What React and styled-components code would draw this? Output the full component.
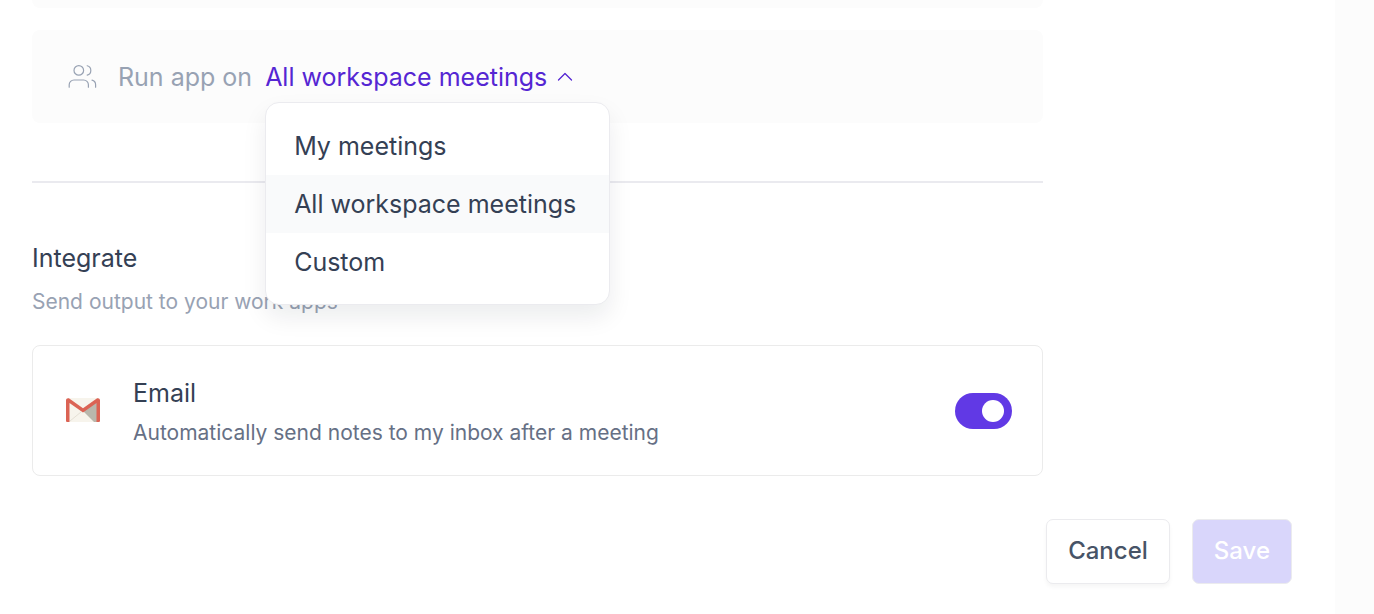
import React, { useState } from 'react';
import styled, { createGlobalStyle } from 'styled-components';

const GlobalStyle = createGlobalStyle`
    * {
        box-sizing: border-box;
    }

    body {
        margin: 0;
        background: #fcfcfc;
        font-family: Inter, "Open Sans", sans-serif;
        color: #344054;
    }

    button {
        font-family: inherit;
        cursor: pointer;
    }
`

const Panel = styled.main`
    min-height: 100vh;
    margin-right: 39px;
    padding: 0 43px 30px 32px;
    background: #fff;
`

const Content = styled.div`
    margin-right: 249px;
`

const PreviousCard = styled.div`
    height: 8px;
    margin-bottom: 22px;
    border-radius: 0 0 8px 8px;
    background: #fcfcfc;
`

const OptionCard = styled.div`
    display: flex;
    align-items: center;
    height: 93px;
    padding: 0 36px;
    border-radius: 8px;
    background: #fcfcfc;
    color: #98a2b3;
    font-size: 25px;
    line-height: 32px;
`

const OptionLabel = styled.span`
    margin: 0 13px 0 20px;
`

const Dropdown = styled.div`
    position: relative;
`

const DropdownButton = styled.button`
    display: flex;
    align-items: center;
    gap: 10px;
    padding: 0;
    border: none;
    background: none;
    color: #5526d3;
    font-size: 25px;
    line-height: 32px;
`

const Menu = styled.div`
    position: absolute;
    z-index: 10;
    top: 41px;
    left: 0;
    width: 345px;
    padding: 14px 0 13px;
    border: 1px solid #ebebef;
    border-radius: 14px;
    background: #fff;
    box-shadow: 0 12px 24px rgba(17, 24, 39, .08);
`

const MenuItem = styled.button`
    display: block;
    width: 100%;
    height: 58px;
    padding: 0 28px;
    border: none;
    background: ${({ $active }) => $active ? '#f9fafb' : 'transparent'};
    color: #344054;
    font-size: 25px;
    line-height: 32px;
    text-align: left;
    white-space: nowrap;
`

const Divider = styled.hr`
    height: 2px;
    margin: 58px 0 59px;
    border: none;
    background: #eaeaef;
`

const Title = styled.h2`
    margin: 0;
    font-size: 25px;
    font-weight: 400;
    line-height: 32px;
`

const Subtitle = styled.p`
    margin: 13px 0 29px;
    color: #98a2b3;
    font-size: 21px;
    line-height: 29px;
`

const IntegrationCard = styled.section`
    display: flex;
    align-items: center;
    height: 131px;
    padding: 0 30px 0 33px;
    border: 1px solid #ebebeb;
    border-radius: 8px;
`

const IntegrationText = styled.label`
    flex: 1;
    margin-left: 33px;
    padding-top: 3px;
`

const IntegrationName = styled.span`
    display: block;
    margin-bottom: 9px;
    font-size: 25px;
    line-height: 32px;
`

const IntegrationInfo = styled.span`
    display: block;
    color: #667085;
    font-size: 21px;
    line-height: 29px;
`

const Toggle = styled.input`
    appearance: none;
    display: flex;
    width: 57px;
    height: 36px;
    margin: 0;
    padding: 7px 8px;
    border-radius: 18px;
    background: #d1d5db;
    cursor: pointer;

    &::before {
        content: '';
        width: 22px;
        height: 22px;
        border-radius: 50%;
        background: #fff;
    }

    &:checked {
        justify-content: flex-end;
        background: #6139e5;
    }
`

const Actions = styled.div`
    display: flex;
    justify-content: flex-end;
    gap: 22px;
    margin-top: 43px;
`

const ActionButton = styled.button`
    height: 65px;
    padding: 0 21px 2px;
    border: 1px solid #ebebee;
    border-radius: 7px;
    background: ${({ $primary }) => $primary ? '#d9d6fb' : '#fff'};
    color: ${({ $primary }) => $primary ? '#fff' : '#475467'};
    box-shadow: ${({ $primary }) => $primary ? 'none' : '0 3px 4px rgba(0, 0, 0, .04)'};
    font-size: 24px;
    font-weight: 500;
    line-height: 32px;
`

const UsersIcon = () => (
    <svg width="30" height="30" viewBox="0 0 25 25" fill="none" stroke="#98a2b3" strokeLinecap="round" strokeLinejoin="round" aria-hidden="true">
        <path d="M17 21v-2a4 4 0 0 0-4-4H5a4 4 0 0 0-4 4v2" />
        <circle cx="9" cy="7" r="4" />
        <path d="M23 21v-2a4 4 0 0 0-3-3.87M16 3.13a4 4 0 0 1 0 7.75" />
    </svg>
)

const ChevronIcon = () => (
    <svg width="16" height="10" viewBox="0 0 16 10" fill="none" stroke="currentColor" strokeWidth="1.3" strokeLinecap="round" strokeLinejoin="round" aria-hidden="true">
        <path d="M1.5 8 8 1.5 14.5 8" />
    </svg>
)

const GmailIcon = () => (
    <svg width="34" height="26" viewBox="0 0 34 26" aria-hidden="true">
        <rect x="1" y="0" width="32" height="24" rx="2" fill="#f7f4ec" />
        <path d="M17 13 32 3v21h-4z" fill="#b9b7ac" />
        <path d="m4 23 11-9" stroke="#e5e0d5" strokeWidth="1" />
        <path d="M0 2.5C0 .5 1.8-.4 3.6.7L17 10.2 30.400.7C32.200-.4 34 .5 34 2.500V22.500C34 23.500 33.500 24 32.500 24H30.500V5L17 14.600 3.500 5V24H1.500C.5 24 0 23.500 0 22.500Z" fill="#db6354" />
    </svg>
)

const options = ['My meetings', 'All workspace meetings', 'Custom']

const App = () => {
    const [open, setOpen] = useState(true)
    const [selected, setSelected] = useState('All workspace meetings')
    const [email, setEmail] = useState(true)

    const onSelect = (option) => {
        setSelected(option)
        setOpen(false)
    }

    return (
        <>
            <GlobalStyle />
            <Panel>
                <Content>
                    <PreviousCard />
                    <OptionCard>
                        <UsersIcon />
                        <OptionLabel id="run-label">Run app on</OptionLabel>
                        <Dropdown>
                            <DropdownButton type="button" aria-haspopup="menu" aria-expanded={open} onClick={() => setOpen(!open)}>
                                <span>{selected}</span>
                                <ChevronIcon />
                            </DropdownButton>
                            {open && <Menu role="menu" aria-labelledby="run-label">
                                {options.map(option => (
                                    <MenuItem
                                        key={option}
                                        type="button"
                                        role="menuitemradio"
                                        aria-checked={option === selected}
                                        $active={option === selected}
                                        onClick={() => onSelect(option)}
                                    >
                                        {option}
                                    </MenuItem>
                                ))}
                            </Menu>}
                        </Dropdown>
                    </OptionCard>
                    <Divider />
                    <Title>Integrate</Title>
                    <Subtitle>Send output to your work apps</Subtitle>
                    <IntegrationCard>
                        <GmailIcon />
                        <IntegrationText htmlFor="email-toggle">
                            <IntegrationName>Email</IntegrationName>
                            <IntegrationInfo>Automatically send notes to my inbox after a meeting</IntegrationInfo>
                        </IntegrationText>
                        <Toggle id="email-toggle" type="checkbox" role="switch" checked={email} onChange={e => setEmail(e.target.checked)} />
                    </IntegrationCard>
                </Content>
                <Actions>
                    <ActionButton type="button">Cancel</ActionButton>
                    <ActionButton type="submit" $primary disabled>Save</ActionButton>
                </Actions>
            </Panel>
        </>
    );
};

export default App;
